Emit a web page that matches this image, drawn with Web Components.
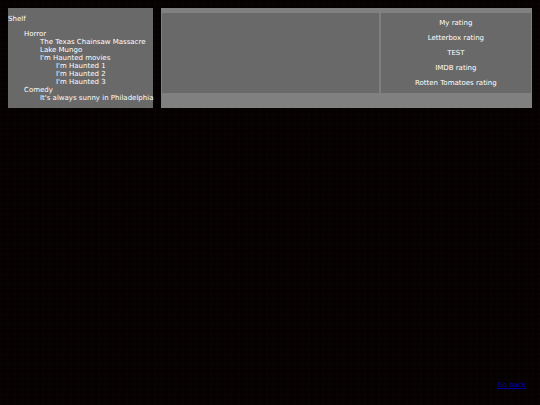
<!DOCTYPE html>
<html lang="en">
<head>
<meta charset="utf-8">
<title>Shelf</title>
<style>
  body {
    margin: 0;
    background-color: #050101;
    background-image:
      repeating-linear-gradient(0deg, rgba(60, 35, 25, 0.04) 0 2px, transparent 2px 5px),
      repeating-linear-gradient(90deg, rgba(60, 35, 25, 0.04) 0 2px, transparent 2px 7px);
    color: white;
    font: 7px/8px "DejaVu Sans", Verdana, sans-serif;
  }
</style>
</head>
<body>
<shelf-page>
  <shelf-list slot="shelf" heading="Shelf">
    <shelf-item label="Horror">
      <shelf-item label="The Texas Chainsaw Massacre"></shelf-item>
      <shelf-item label="Lake Mungo"></shelf-item>
      <shelf-item label="I'm Haunted movies">
        <shelf-item label="I'm Haunted 1"></shelf-item>
        <shelf-item label="I'm Haunted 2"></shelf-item>
        <shelf-item label="I'm Haunted 3"></shelf-item>
      </shelf-item>
    </shelf-item>
    <shelf-item label="Comedy">
      <shelf-item label="It's always sunny in Philadelphia"></shelf-item>
    </shelf-item>
  </shelf-list>
  <movie-details>
    <rating-list slot="ratings">
      <p>My rating</p>
      <p>Letterbox rating</p>
      <p>TEST</p>
      <p>IMDB rating</p>
      <p>Rotten Tomatoes rating</p>
    </rating-list>
  </movie-details>
  <back-link slot="footer" href="#">Go back</back-link>
</shelf-page>

<script>
class ShelfPage extends HTMLElement {
  constructor(){
    super();
    this._root = this.attachShadow({mode: 'open'});
  }

  connectedCallback(){
    this._root.innerHTML = `
    <style>
      :host {
        display: flex;
        flex-direction: column;
        justify-content: space-between;
        box-sizing: border-box;
        min-height: 100vh;
        padding: 8px;
      }
      main {
        display: grid;
        grid-template-columns: max-content 1fr;
        gap: 8px;
      }
      footer {
        padding: 8px 6px;
        text-align: right;
      }
    </style>
    <main>
      <slot name="shelf"></slot>
      <slot></slot>
    </main>
    <footer><slot name="footer"></slot></footer>`;
  }
}

class ShelfList extends HTMLElement {
  constructor(){
    super();
    this._root = this.attachShadow({mode: 'open'});
  }

  connectedCallback(){
    this._root.innerHTML = `
    <style>
      :host {
        display: block;
        padding: 7px 0 6px;
        background: dimgray;
      }
      .heading {
        margin: 0 0 7px;
      }
      .items {
        padding-left: 16px;
      }
    </style>
    <p class="heading">${this.getAttribute('heading')}</p>
    <div class="items"><slot></slot></div>`;
  }
}

class ShelfItem extends HTMLElement {
  constructor(){
    super();
    this._root = this.attachShadow({mode: 'open'});
  }

  connectedCallback(){
    this._root.innerHTML = `
    <style>
      :host {
        display: block;
      }
      .children {
        padding-left: 16px;
      }
    </style>
    <div class="label">${this.getAttribute('label')}</div>
    <div class="children"><slot></slot></div>`;
  }
}

class MovieDetails extends HTMLElement {
  constructor(){
    super();
    this._root = this.attachShadow({mode: 'open'});
  }

  connectedCallback(){
    this._root.innerHTML = `
    <style>
      :host {
        display: grid;
        grid-template-columns: 59fr 41fr;
        gap: 2px;
        padding: 5px 1px 15px;
        background: gray;
      }
      .cell {
        background: dimgray;
      }
    </style>
    <div class="cell"><slot></slot></div>
    <div class="cell"><slot name="ratings"></slot></div>`;
  }
}

class RatingList extends HTMLElement {
  constructor(){
    super();
    this._root = this.attachShadow({mode: 'open'});
  }

  connectedCallback(){
    this._root.innerHTML = `
    <style>
      :host {
        display: flex;
        flex-direction: column;
        gap: 7px;
        padding: 6px 0;
        text-align: center;
      }
      ::slotted(p) {
        margin: 0;
      }
    </style>
    <slot></slot>`;
  }
}

class BackLink extends HTMLElement {
  constructor(){
    super();
    this._root = this.attachShadow({mode: 'open'});
  }

  connectedCallback(){
    this._root.innerHTML = `
    <style>
      :host {
        display: inline-block;
      }
      a {
        color: #0000a0;
      }
    </style>
    <a href="${this.getAttribute('href')}"><slot></slot></a>`;
  }
}

window.customElements.define('shelf-page', ShelfPage);
window.customElements.define('shelf-list', ShelfList);
window.customElements.define('shelf-item', ShelfItem);
window.customElements.define('movie-details', MovieDetails);
window.customElements.define('rating-list', RatingList);
window.customElements.define('back-link', BackLink);
</script>
</body>
</html>
